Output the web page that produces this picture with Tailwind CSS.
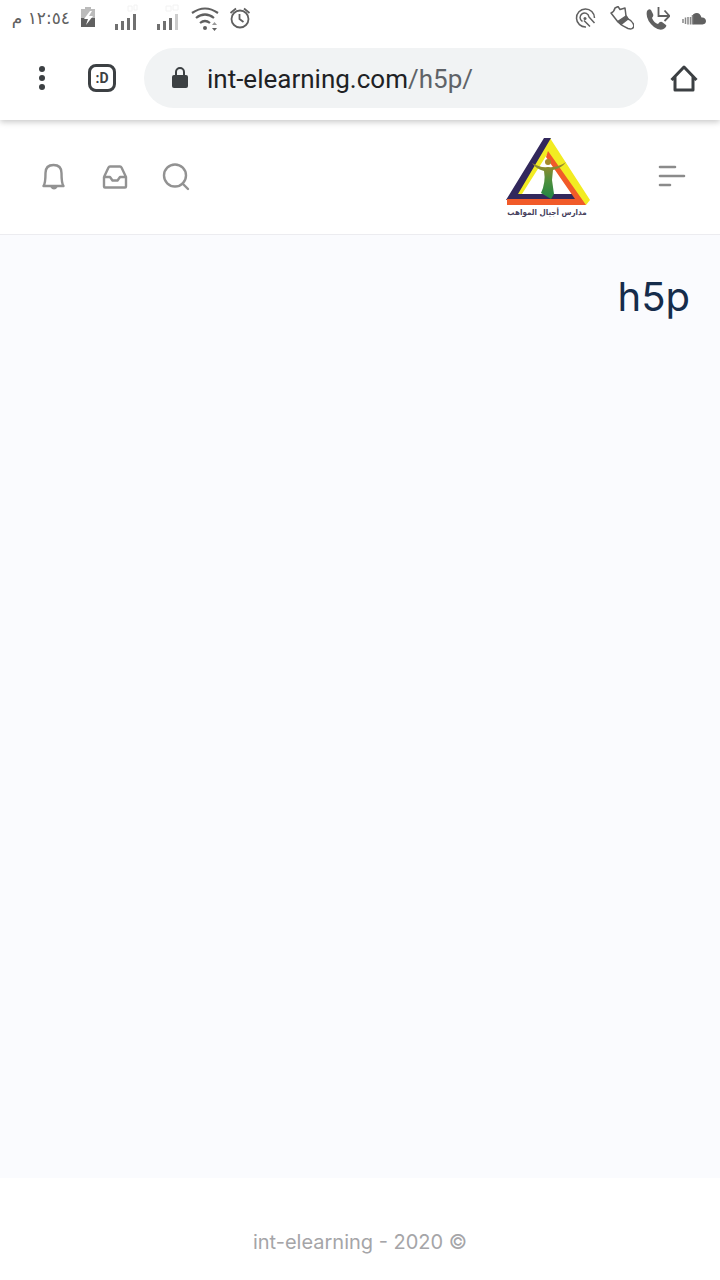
<!DOCTYPE html>
<html lang="ar">
<head>
    <meta charset="UTF-8">
    <meta name="viewport" content="width=device-width, initial-scale=1.0">
    <title>h5p</title>
    <script src="https://cdn.jsdelivr.net/npm/@tailwindcss/browser@4"></script>
</head>
<body class="min-h-screen flex flex-col bg-white font-['Inter','DejaVu_Sans',sans-serif]">
    <!-- status bar -->
    <div class="relative z-10 bg-white h-9 flex items-center justify-between pl-3 pr-3.5 text-[#606060]">
        <div class="flex items-center">
            <span dir="rtl" class="w-[58px] whitespace-nowrap text-[17px] leading-8 font-['DejaVu_Sans',sans-serif]">١٢:٥٤ م</span>
            <svg class="ml-2.5 w-4 h-6" viewBox="0 0 16 24">
                <path d="M5 1h6v2h4v9H1V3h4z" fill="#bbb"/>
                <path d="M1 12h14v9H1z" fill="#606060"/>
                <path d="M10 5 4 13h4l-2 6 7-9H9l3-5z" fill="#fff"/>
            </svg>
            <svg class="ml-4 w-7 h-7" viewBox="0 0 28 28" fill="#707070">
                <path d="M3 20h3v6H3zM9 17h3v9H9zM15 14h3v12h-3zM21 10h3v16h-3z"/>
                <path d="M16 2h4v5h-4zM22 1h3v5h-3z" fill="none" stroke="#f2f2f2"/>
            </svg>
            <svg class="ml-3.5 w-7 h-7" viewBox="0 0 28 28" fill="#707070">
                <path d="M3 20h3v6H3zM9 17h3v9H9zM15 14h3v12h-3z"/>
                <path d="M21 10h3v16h-3z" fill="#ccc"/>
                <path d="M12 2h5v5h-5zM19 1h5v5h-5z" fill="none" stroke="#f2f2f2"/>
            </svg>
            <svg class="ml-2 w-8 h-7" viewBox="0 0 32 28" fill="none" stroke="#606060" stroke-width="2.2">
                <path d="M2 9q13-9 26 0M6 14q9-7 18 0M10 19q5-4 10 0"/>
                <circle cx="15" cy="24" r="2" fill="#606060" stroke="none"/>
                <path d="m22 21 2.500-3 2.500 3z" fill="#999" stroke="none"/>
                <path d="m22 24 2.500 3 2.500-3z" fill="#606060" stroke="none"/>
            </svg>
            <svg class="ml-1.5 w-6 h-6" viewBox="0 0 24 24" fill="none" stroke="#606060" stroke-width="1.800">
                <circle cx="12" cy="13" r="8.500"/>
                <path d="M11.500 8v5l4 3M2.500 7 8 2.500M16 2.500 21.500 7"/>
            </svg>
        </div>
        <div class="flex items-center gap-3">
            <svg class="w-6 h-6" viewBox="0 0 24 24" fill="none" stroke="#606060" stroke-width="1.500">
                <path d="M12 21A9 9 0 1 1 20.500 12"/>
                <path d="M8.500 15.500A4.500 4.500 0 1 1 15 11l5.500 6M10 14.500l6 6"/>
                <circle cx="11" cy="12.500" r="1.500" fill="#606060" stroke="none"/>
            </svg>
            <svg class="w-6 h-6" viewBox="0 0 24 24" fill="none" stroke="#606060" stroke-width="1.500" stroke-linejoin="round">
                <path d="M1 7Q4 6 5 2l3-1.500 2 3 5-1.500 1 8 2 3q5 2 6 7-1 4-6 2.500Q12 20 8 16z"/>
                <path d="m8.500 15 7.500-5 2 3-7 5.500z" fill="#606060"/>
            </svg>
            <svg class="w-6 h-6" viewBox="0 0 24 24" fill="#606060">
                <path d="M1 5q2-3 4-1l2 4q1 2-1 4 2 5 6 6 2-3 4-2l4 3q1 1-1 3-4 4-11-1Q-1 13 1 5z"/>
                <path d="M12.500 1v9H23M18.500 4.500 23.500 10l-5 5" fill="none" stroke="#606060" stroke-width="1.800"/>
            </svg>
            <svg class="w-6 h-6" viewBox="0 0 24 24" fill="#606060">
                <path d="M11 8.500q6-4 8.500 3 4-.500 4.500 3.500 0 3-3.500 3.500H11z"/>
                <path d="M1 13v4M3.500 11.500V18M6 11v7.500M8.500 11v7.500M10.500 9v9.500" stroke="#888" stroke-width="1.500"/>
            </svg>
        </div>
    </div>

    <!-- browser toolbar -->
    <div class="relative h-[84px] flex items-center pl-7 pr-5 bg-white shadow-[0_2px_6px_rgba(0,0,0,0.22)]">
        <button type="button" aria-label="Menu" class="w-7 h-7">
            <svg class="w-7 h-7" viewBox="0 0 28 28" fill="#3c4043">
                <circle cx="14" cy="5" r="3"/><circle cx="14" cy="14" r="3"/><circle cx="14" cy="23" r="3"/>
            </svg>
        </button>
        <button type="button" aria-label="Tabs" class="ml-8 w-7 h-7 flex items-center justify-center rounded-lg border-3 border-[#3c4043] text-[#3c4043] text-sm font-bold font-['Roboto',sans-serif]">:D</button>
        <div class="ml-7 h-15 flex-1 flex items-center rounded-full bg-[#f1f3f4] pl-6">
            <svg class="w-6 h-6 shrink-0" viewBox="0 0 24 24">
                <path d="M8 10V6a4 4 0 0 1 8 0v4" fill="none" stroke="#3c4043" stroke-width="2"/>
                <rect x="4" y="9" width="16" height="13" rx="2" fill="#3c4043"/>
            </svg>
            <div role="textbox" contenteditable="true" aria-label="Address" class="ml-[15px] pt-0.5 flex-1 whitespace-nowrap text-[26px] leading-8 text-[#202124] outline-none font-['Roboto',sans-serif]">int-elearning.com<span class="text-[#5f6368]">/h5p/</span></div>
        </div>
        <button type="button" aria-label="Home" class="ml-5 w-8 h-8">
            <svg class="w-8 h-8" viewBox="0 0 32 32" fill="none" stroke="#3c4043" stroke-width="3">
                <path d="M3.500 18 16 5l12.500 13M7 15v13h18V15" stroke-linejoin="round"/>
            </svg>
        </button>
    </div>

    <!-- site header -->
    <header class="h-[115px] flex items-center justify-between pl-10 pr-8 border-b border-[#ececf0] bg-white">
        <div class="flex items-center gap-[33px] text-[#929292]">
            <button type="button" aria-label="Notifications" class="w-7 h-7">
                <svg class="w-7 h-7" viewBox="0 0 28 28" fill="none" stroke="currentColor" stroke-width="2.400" stroke-linejoin="round">
                    <path d="M3.500 23c1.500-2 2-5 2-13 0-5 3-8 8-8s8 3 8 8c0 8 .500 11 2 13z"/>
                    <path d="M9.500 23q4.500 7 9 0z" fill="currentColor" stroke="none"/>
                </svg>
            </button>
            <button type="button" aria-label="Messages" class="w-7 h-7">
                <svg class="w-7 h-7" viewBox="0 0 28 28" fill="none" stroke="currentColor" stroke-width="2.400" stroke-linejoin="round">
                    <path d="m3 14 4.500-9.500q.500-1 1.500-1h10q1 0 1.500 1L25 14v9.500q0 1-1 1H4q-1 0-1-1V14h6l2.500 3.500h5L19 14h6"/>
                </svg>
            </button>
            <button type="button" aria-label="Search" class="w-7 h-7">
                <svg class="w-7 h-7" viewBox="0 0 28 28" fill="none" stroke="currentColor" stroke-width="2.400" stroke-linecap="round">
                    <circle cx="13" cy="12.500" r="11"/><path d="m20.500 20.500 5.500 5.500"/>
                </svg>
            </button>
        </div>
        <div class="flex items-center">
            <a href="#" class="block mr-[66px]">
                <svg class="w-[86px] h-[84px]" viewBox="0 0 86 84" role="img" aria-label="مدارس أجيال المواهب">
                    <defs>
                        <linearGradient id="figure" x1="0" y1="0" x2="0" y2="1">
                            <stop offset="0" stop-color="#a58a2c"/>
                            <stop offset="0.500" stop-color="#4f8f3c"/>
                            <stop offset="1" stop-color="#1f8545"/>
                        </linearGradient>
                    </defs>
                    <path d="M46 3 86 65l-4 5-9-6L44 18 18 59h-6L40 9z" fill="#f2ec22"/>
                    <path d="M40 3h7L14 59h58l4 6H2z" fill="#32285c"/>
                    <path d="m44 16 38 54H3v-6h68L42 22z" fill="#f15a29"/>
                    <circle cx="44" cy="27" r="3" fill="#a58a2c"/>
                    <path d="M28 28q8 5 16 4 10 1 18-5-4 6-13 8l-1 10 2 14-3 5-10-6q5-11 3-22-8-2-12-8z" fill="url(#figure)"/>
                    <text x="43" y="80" text-anchor="middle" font-size="8" font-weight="700" font-family="DejaVu Sans Condensed, DejaVu Sans, sans-serif" fill="#45405c">مدارس أجيال المواهب</text>
                </svg>
            </a>
            <button type="button" aria-label="Navigation" class="w-8 h-8">
                <svg class="w-8 h-8" viewBox="0 0 32 32" fill="none" stroke="#8b8b8b" stroke-width="2.600" stroke-linecap="round">
                    <path d="M4 6h15M4 15h24M4 24h10"/>
                </svg>
            </button>
        </div>
    </header>

    <main class="flex-1 bg-[#fafbfe] px-[30px] pt-9 text-right">
        <h1 class="text-[40px] leading-[52px] text-[#152c4b]">h5p</h1>
    </main>

    <footer class="h-[102px] pt-[50px] bg-white text-center text-xl leading-7 text-[#a5a5a8]">int-elearning - 2020 ©</footer>
</body>
</html>
